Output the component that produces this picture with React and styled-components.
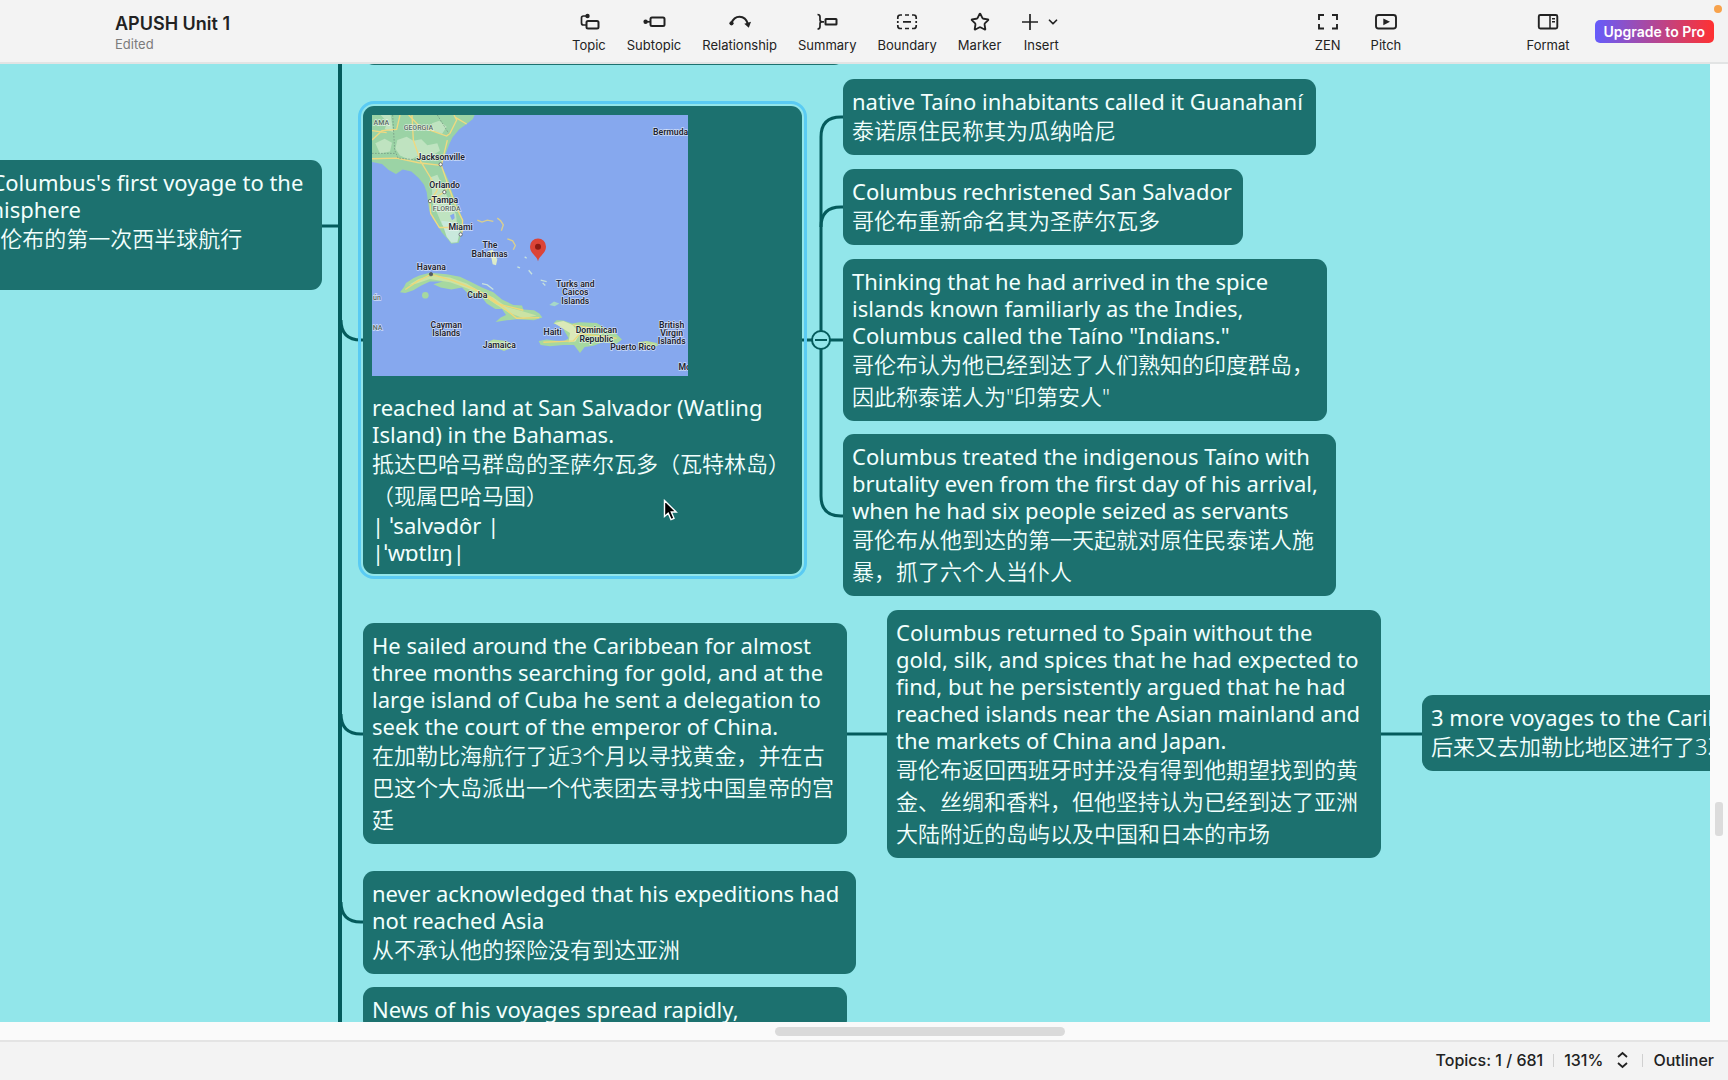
import styled, { createGlobalStyle } from "styled-components";
import { ChevronDown, Star } from "lucide-react";

const GlobalStyle = createGlobalStyle`
  * {
    box-sizing: border-box;
  }

  body {
    margin: 0;
    font-family: Inter, "Liberation Sans", sans-serif;
    color: #222;
  }

  button {
    font: inherit;
    color: inherit;
    border: none;
    background: none;
    padding: 0;
    cursor: pointer;
  }
`;

const Page = styled.div`
  display: flex;
  flex-direction: column;
  height: 100vh;
  overflow: hidden;
  background: #f3f3f3;
`;

/* ---------- toolbar ---------- */

const Toolbar = styled.header`
  position: relative;
  display: grid;
  grid-template-columns: 571fr auto 254fr auto 125fr auto auto;
  align-items: center;
  height: 64px;
  flex: none;
  padding-right: 14px;
  border-bottom: 2px solid #e2e4e4;
`;

const DocTitle = styled.div`
  padding: 3px 0 0 115px;
  white-space: nowrap;
`;

const DocName = styled.h1`
  margin: 0;
  font-size: 18px;
  font-weight: 600;
  line-height: 22px;
`;

const DocState = styled.div`
  font-size: 13px;
  line-height: 18px;
  color: #7b7b7b;
`;

const ToolGroup = styled.div`
  display: flex;
  gap: ${(p) => p.$gap}px;
  padding-top: 4px;
`;

const ToolButton = styled.button`
  display: flex;
  flex-direction: column;
  align-items: center;
  gap: 4px;
  font-size: 13px;
  line-height: 18px;
`;

const IconRow = styled.span`
  display: flex;
  align-items: center;
  justify-content: center;
  gap: 8px;
  height: 20px;
`;

const UpgradeButton = styled.button`
  height: 23px;
  margin-left: 25px;
  padding: 0 9px;
  border-radius: 5px;
  background: linear-gradient(90deg, #655cfb, #ff3131);
  color: #fff;
  font-size: 14px;
  font-weight: 600;
`;

const NoticeDot = styled.span`
  position: absolute;
  top: 5px;
  right: 6px;
  width: 8px;
  height: 8px;
  border-radius: 50%;
  background: #f7a24b;
`;

/* ---------- canvas ---------- */

const Workspace = styled.main`
  flex: 1;
  min-height: 0;
  display: grid;
  grid-template-columns: 1fr 18px;
  grid-template-rows: 1fr 18px;
  background: #fafafa;
`;

const Canvas = styled.section`
  position: relative;
  overflow: hidden;
  background: #92e6ea;
`;

const Links = styled.svg`
  position: absolute;
  top: 0;
  left: 0;
  width: 100%;
  height: 100%;
  fill: none;
  stroke: #045b5c;
  stroke-width: 3;
`;

const Topic = styled.article`
  position: absolute;
  left: ${(p) => p.$x}px;
  top: ${(p) => p.$y}px;
  width: ${(p) => p.$w}px;
  padding: 9px 9px 8px;
  border-radius: 11px;
  background: #1c716f;
  color: #f2fffd;
  font-family: "Noto Sans", "Noto Sans CJK SC", sans-serif;
  font-size: 22px;
  white-space: nowrap;
  outline: ${(p) => (p.$selected ? "3px solid #5acbf3" : "none")};
  outline-offset: 2px;
`;

const Line = styled.p`
  margin: 0;
  height: ${(p) => (p.$zh ? 32 : 27)}px;
  line-height: ${(p) => (p.$zh ? 30 : 26)}px;
  font-weight: ${(p) => (p.$zh ? 350 : 400)};
`;

const MapImage = styled.svg`
  display: block;
  width: 316px;
  height: 261px;
  margin-bottom: 18px;
`;

const Label = styled.text`
  font-family: Roboto, "Liberation Sans", sans-serif;
  font-size: ${(p) => (p.$minor ? 21 : 26)}px;
  font-weight: ${(p) => (p.$minor ? 500 : 600)};
  text-anchor: middle;
  fill: ${(p) => (p.$minor ? "#5b6b66" : "#1d2430")};
  stroke: rgba(255, 255, 255, 0.6);
  stroke-width: 4px;
  paint-order: stroke;
`;

const CollapseButton = styled.button`
  position: absolute;
  left: 811px;
  top: 266px;
  width: 20px;
  height: 20px;
  display: flex;
  align-items: center;
  justify-content: center;
  border: 2px solid #045b5c;
  border-radius: 50%;
  background: #92e6ea;

  &::before {
    content: "";
    width: 12px;
    height: 2px;
    background: #045b5c;
  }
`;

const Pointer = styled.svg`
  position: absolute;
  left: 663px;
  top: 435px;
  width: 15px;
  height: 23px;
`;

const VTrack = styled.div`
  padding-left: 5px;
`;

const VThumb = styled.div`
  position: relative;
  top: 77%;
  width: 8px;
  height: 34px;
  border-radius: 3px;
  background: #dcdcdc;
`;

const HTrack = styled.div`
  padding-top: 5px;
`;

const HThumb = styled.div`
  width: 17%;
  height: 9px;
  margin-left: 45.3%;
  border-radius: 5px;
  background: #dadada;
`;

/* ---------- status bar ---------- */

const StatusBar = styled.footer`
  display: flex;
  flex: none;
  align-items: center;
  justify-content: flex-end;
  gap: 10px;
  height: 40px;
  padding: 0 14px 2px 0;
  border-top: 2px solid #e4e4e4;
  font-size: 16px;
  font-weight: 500;
`;

const Divider = styled.span`
  width: 1px;
  height: 13px;
  background: #d0d0d0;
`;

const ZoomButton = styled.button`
  display: flex;
  align-items: center;
  gap: 14px;
  padding-right: 4px;
`;

const Glyph = ({ children, width = 24 }) => (
  <svg
    width={width}
    height="20"
    viewBox={`0 0 ${width} 20`}
    fill="none"
    stroke="currentColor"
    strokeWidth="1.7"
    aria-hidden="true"
  >
    {children}
  </svg>
);

const TopicIcon = () => (
  <Glyph>
    <rect x="9.5" y="9" width="12" height="7.5" rx="1.5" strokeWidth="2" />
    <path d="M10 4H6.5Q4.5 4 4.5 6V11Q4.5 13 6.5 13H9" />
    <circle cx="10.5" cy="4" r="2.2" fill="currentColor" stroke="none" />
  </Glyph>
);

const SubtopicIcon = () => (
  <Glyph>
    <rect x="8.5" y="5.5" width="14" height="8.5" rx="1.5" strokeWidth="2" />
    <path d="M3 9.8H8" />
    <circle cx="3.6" cy="9.8" r="2.2" fill="currentColor" stroke="none" />
  </Glyph>
);

const RelationshipIcon = () => (
  <Glyph>
    <path d="M3.5 11C5 7 8 4.7 11.5 4.7S18.5 7 20 12" strokeWidth="2" />
    <circle cx="3.5" cy="11.3" r="2.1" fill="currentColor" stroke="none" />
    <path d="M16.3 11.8L23 9.8L20.8 15.8Z" fill="currentColor" stroke="none" />
  </Glyph>
);

const SummaryIcon = () => (
  <Glyph>
    <path d="M2.5 2.5Q5 2.5 5 5V7.8Q5 9.8 7 9.8Q5 9.8 5 11.8V14.5Q5 17 2.5 17M6 9.8H9" />
    <rect x="10.5" y="7" width="11" height="5.5" rx="0.5" strokeWidth="2" />
  </Glyph>
);

const BoundaryIcon = () => (
  <Glyph>
    <path d="M2.8 7V5.5Q2.8 3 5.3 3H7M10 3H14M17 3H18.7Q21.2 3 21.2 5.5V7M21.2 9V11M21.2 13V14Q21.2 16.5 18.7 16.5H17M14 16.5H10M7 16.5H5.3Q2.8 16.5 2.8 14V13M2.8 11V9M8 9.8H16" />
  </Glyph>
);

const ZenIcon = () => (
  <Glyph>
    <path d="M3 8V3H8M16 3H21V8M21 12V16.5H16M8 16.5H3V12" strokeWidth="1.9" />
  </Glyph>
);

const PitchIcon = () => (
  <Glyph>
    <rect x="2" y="3" width="20" height="13.5" rx="2.5" strokeWidth="1.9" />
    <path d="M9.3 6.5L16 9.8L9.3 13.2Z" fill="currentColor" stroke="none" />
  </Glyph>
);

const FormatIcon = () => (
  <Glyph>
    <rect x="2.8" y="3" width="18.5" height="13.5" rx="1.5" strokeWidth="1.9" />
    <path d="M14 3V16.5M16 6.7H19M16 9.7H19" strokeWidth="1.5" />
  </Glyph>
);

const MarkerIcon = () => <Star size={20} strokeWidth={2.2} />;

const InsertIcon = () => (
  <>
    <Glyph width={16}>
      <path d="M8 2V18M0 10H16" />
    </Glyph>
    <ChevronDown size={14} strokeWidth={3} />
  </>
);

const editTools = [
  { label: "Topic", Icon: TopicIcon },
  { label: "Subtopic", Icon: SubtopicIcon },
  { label: "Relationship", Icon: RelationshipIcon },
  { label: "Summary", Icon: SummaryIcon },
  { label: "Boundary", Icon: BoundaryIcon },
  { label: "Marker", Icon: MarkerIcon },
  { label: "Insert", Icon: InsertIcon },
];

const viewTools = [
  { label: "ZEN", Icon: ZenIcon },
  { label: "Pitch", Icon: PitchIcon },
];

const Tools = ({ items, gap }) => (
  <ToolGroup $gap={gap}>
    {items.map(({ label, Icon }) => (
      <ToolButton key={label} type="button">
        <IconRow>
          <Icon />
        </IconRow>
        {label}
      </ToolButton>
    ))}
  </ToolGroup>
);

const CaribbeanMap = () => (
  <MapImage viewBox="66 75 948 782" preserveAspectRatio="none" role="img">
    <rect x="66" y="75" width="948" height="782" fill="#86a8ee" />

    {/* Georgia, Alabama and Florida */}
    <path
      d="M66 75H374L368 88L350 102L328 118L308 142L298 162L288 188L280 205L274 226L284 246L296 272L304 300L316 330L328 360L338 388L340 412L332 440L326 458L304 461L292 446L276 428L262 404L248 384L238 362L234 336L230 306L222 284L206 264L184 244L158 238L138 252L116 240L96 222L66 216Z"
      fill="#9bd3a5"
    />
    <path
      d="M92 75L112 96L104 118L130 126L122 75ZM142 150L170 140L190 152L214 148L232 166L262 160L270 182L240 200L206 196L180 210L150 196L136 176ZM246 100L268 92L290 110L276 132L250 124ZM76 160L104 146L126 158L120 184L90 190ZM240 262L262 254L276 284L296 330L318 372L322 410L300 430L276 404L262 370L248 340L246 300Z"
      fill="#bfe3c0"
    />
    <path d="M274 392L308 396L330 424L322 456L304 458L290 440Z" fill="#c9e9dc" />
    <path d="M300 376L312 370L314 384L306 390Z" fill="#86a8ee" />
    <path
      d="M66 206L140 204L206 218L272 226M186 75L190 150L212 214L240 260L262 300M176 75L210 110L290 138L300 130L320 90L312 75M350 102L316 82M274 226L292 150M274 226L296 290L318 350L338 390L336 428M262 300L240 334L242 370L268 412L304 412M240 334L282 306L296 290M66 150L96 122L140 118L150 75M66 122L110 128"
      fill="none"
      stroke="#f0d980"
      strokeWidth="4"
    />
    <path
      d="M128 75L134 180L144 204L206 210M66 190H134M262 75L296 130"
      fill="none"
      stroke="#6d8d7b"
      strokeWidth="2"
      strokeDasharray="5 4"
    />

    {/* Cuba */}
    <path
      d="M150 606L162 590L168 578L190 564L208 556L240 548L290 552L330 560L360 574L396 592L430 606L456 628L490 644L516 646L520 658L552 660L568 670L577 682L552 690L500 687L470 690L437 695L452 682L468 674L456 656L436 656L410 640L398 624L370 618L350 606L336 592L304 598L272 592L250 582L278 574L240 574L214 586L190 600L166 608Z"
      fill="#a6d8a0"
    />
    <path
      d="M176 584L206 566L250 556L300 562L350 580L390 604L430 622L470 650L520 664L560 676L520 684L474 666L440 644L400 616L350 594L300 576L240 566L200 580Z"
      fill="#cbe3a4"
    />
    <path
      d="M166 598L204 572L244 552L310 572L372 596L420 620L470 660L500 684L568 682M372 596L440 640L520 660"
      fill="none"
      stroke="#efd777"
      strokeWidth="4"
    />
    <circle cx="226" cy="615" r="10" fill="#a6d8a0" />

    {/* Jamaica, Hispaniola, Puerto Rico */}
    <path d="M412 756L430 748L470 752L494 768L462 782L440 772Z" fill="#b6dda0" />
    <path
      d="M610 700L620 690L640 691L666 700L688 696L740 698L766 714L796 728L816 748L800 760L758 756L730 766L704 770L690 788L672 764L640 764L600 768L572 764L566 752L590 748L640 754L656 744L644 724L636 708Z"
      fill="#a6d8a0"
    />
    <path d="M612 698L640 692L668 704L690 730L676 754L656 756L660 728Z" fill="#dbe9b8" />
    <path d="M580 756L670 752L690 730L800 744M668 704L760 720" fill="none" stroke="#efd777" strokeWidth="4" />
    <path d="M864 756L890 752L920 758L924 766L900 772L866 770Z" fill="#b9dc96" />
    <path d="M598 644L612 634L628 640L614 648Z" fill="#a6d8c8" />

    {/* Bahamas */}
    <path d="M382 390L396 396L412 390L430 394M442 384L452 392L460 404L454 422M472 446L488 452L496 466L490 479" fill="none" stroke="#d9cf8f" strokeWidth="4" />
    <path d="M412 484L428 478L442 508L438 525L428 522L424 502Z" fill="#dcebc8" />
    <path d="M502 530L510 533M536 540L546 552M572 570L590 574M578 578L586 586M524 500L530 504M396 580L412 584L430 598" fill="none" stroke="#c7e2dc" strokeWidth="4" />

    <g fill="#fff" stroke="#545b62" strokeWidth="2.5">
      <circle cx="272" cy="223" r="5" />
      <circle cx="283" cy="306" r="5" />
      <circle cx="240" cy="333" r="5" />
      <circle cx="332" cy="433" r="5" />
      <circle cx="243" cy="552" r="5" fill="#545b62" />
    </g>

    <Label $minor x="94" y="105">AMA</Label>
    <Label $minor x="205" y="119">GEORGIA</Label>
    <Label $minor x="290" y="363">FLORIDA</Label>
    <Label $minor x="81" y="628">ún</Label>
    <Label $minor x="83" y="718">NA</Label>
    <Label x="272" y="211">Jacksonville</Label>
    <Label x="284" y="294">Orlando</Label>
    <Label x="285" y="340">Tampa</Label>
    <Label x="332" y="420">Miami</Label>
    <Label x="420" y="475">The</Label>
    <Label x="419" y="500">Bahamas</Label>
    <Label x="244" y="538">Havana</Label>
    <Label x="382" y="624">Cuba</Label>
    <Label x="676" y="590">Turks and</Label>
    <Label x="676" y="615">Caicos</Label>
    <Label x="676" y="640">Islands</Label>
    <Label x="289" y="712">Cayman</Label>
    <Label x="289" y="737">Islands</Label>
    <Label x="448" y="773">Jamaica</Label>
    <Label x="608" y="733">Haiti</Label>
    <Label x="739" y="729">Dominican</Label>
    <Label x="739" y="754">Republic</Label>
    <Label x="849" y="780">Puerto Rico</Label>
    <Label x="965" y="712">British</Label>
    <Label x="965" y="737">Virgin</Label>
    <Label x="965" y="762">Islands</Label>
    <Label x="962" y="134">Bermuda</Label>
    <Label x="1004" y="840">Mo</Label>

    <path d="M564 513C560 496 540 490 540 469A24 24 0 0 1 588 469C588 490 568 496 564 513Z" fill="#dc4437" />
    <circle cx="564" cy="470" r="9" fill="#8d1a12" />
  </MapImage>
);

// y is measured from the top edge of the canvas; "zh" lines are taller
const topics = [
  {
    id: "voyage",
    x: -146,
    y: 96,
    w: 468,
    lines: [
      "Christopher Columbus's first voyage to the",
      "Western Hemisphere",
      { zh: "克里斯托弗·哥伦布的第一次西半球航行" },
      "\u00a0",
    ],
  },
  { id: "previous", x: 363, y: -75, w: 482, lines: ["\u00a0", { zh: "\u00a0" }] },
  {
    id: "landfall",
    x: 363,
    y: 42,
    w: 439,
    selected: true,
    map: true,
    lines: [
      "reached land at San Salvador (Watling",
      "Island) in the Bahamas.",
      { zh: "抵达巴哈马群岛的圣萨尔瓦多（瓦特林岛）" },
      { zh: "（现属巴哈马国）" },
      "| ˈsalvədôr |",
      "|ˈwɒtlɪŋ|",
    ],
  },
  {
    id: "guanahani",
    x: 843,
    y: 15,
    w: 473,
    lines: ["native Taíno inhabitants called it Guanahaní", { zh: "泰诺原住民称其为瓜纳哈尼" }],
  },
  {
    id: "rechristened",
    x: 843,
    y: 105,
    w: 400,
    lines: ["Columbus rechristened San Salvador", { zh: "哥伦布重新命名其为圣萨尔瓦多" }],
  },
  {
    id: "indies",
    x: 843,
    y: 195,
    w: 484,
    lines: [
      "Thinking that he had arrived in the spice",
      "islands known familiarly as the Indies,",
      'Columbus called the Taíno "Indians."',
      { zh: "哥伦布认为他已经到达了人们熟知的印度群岛，" },
      { zh: '因此称泰诺人为"印第安人"' },
    ],
  },
  {
    id: "brutality",
    x: 843,
    y: 370,
    w: 493,
    lines: [
      "Columbus treated the indigenous Taíno with",
      "brutality even from the first day of his arrival,",
      "when he had six people seized as servants",
      { zh: "哥伦布从他到达的第一天起就对原住民泰诺人施" },
      { zh: "暴，抓了六个人当仆人" },
    ],
  },
  {
    id: "caribbean",
    x: 363,
    y: 559,
    w: 484,
    lines: [
      "He sailed around the Caribbean for almost",
      "three months searching for gold, and at the",
      "large island of Cuba he sent a delegation to",
      "seek the court of the emperor of China.",
      { zh: "在加勒比海航行了近3个月以寻找黄金，并在古" },
      { zh: "巴这个大岛派出一个代表团去寻找中国皇帝的宫" },
      { zh: "廷" },
    ],
  },
  {
    id: "return",
    x: 887,
    y: 546,
    w: 494,
    lines: [
      "Columbus returned to Spain without the",
      "gold, silk, and spices that he had expected to",
      "find, but he persistently argued that he had",
      "reached islands near the Asian mainland and",
      "the markets of China and Japan.",
      { zh: "哥伦布返回西班牙时并没有得到他期望找到的黄" },
      { zh: "金、丝绸和香料，但他坚持认为已经到达了亚洲" },
      { zh: "大陆附近的岛屿以及中国和日本的市场" },
    ],
  },
  {
    id: "more-voyages",
    x: 1422,
    y: 631,
    w: 480,
    lines: ["3 more voyages to the Caribbean", { zh: "后来又去加勒比地区进行了3次航行" }],
  },
  {
    id: "asia",
    x: 363,
    y: 807,
    w: 493,
    lines: [
      "never acknowledged that his expeditions had",
      "not reached Asia",
      { zh: "从不承认他的探险没有到达亚洲" },
    ],
  },
  { id: "news", x: 363, y: 923, w: 484, lines: ["News of his voyages spread rapidly,"] },
];

const TopicNode = ({ topic }) => (
  <Topic $x={topic.x} $y={topic.y} $w={topic.w} $selected={topic.selected}>
    {topic.map && <CaribbeanMap />}
    {topic.lines.map((line, i) => (
      <Line key={i} $zh={Boolean(line.zh)} lang={line.zh ? "zh-CN" : "en"}>
        {line.zh || line}
      </Line>
    ))}
  </Topic>
);

const App = () => (
  <Page>
    <GlobalStyle />
    <Toolbar>
      <DocTitle>
        <DocName>APUSH Unit 1</DocName>
        <DocState>Edited</DocState>
      </DocTitle>
      <Tools items={editTools} gap={21} />
      <span />
      <Tools items={viewTools} gap={30} />
      <span />
      <Tools items={[{ label: "Format", Icon: FormatIcon }]} gap={0} />
      <UpgradeButton type="button">Upgrade to Pro</UpgradeButton>
      <NoticeDot />
    </Toolbar>

    <Workspace>
      <Canvas>
        <Links aria-hidden="true">
          <path d="M340 0V1000" strokeWidth="4" />
          <path d="M320 162H340" />
          <path d="M341 256Q341 276 361 276H364" />
          <path d="M341 650Q341 670 361 670H364" />
          <path d="M341 838Q341 858 361 858H364" />
          <path d="M800 276H844" />
          <path d="M821 276V73Q821 53 841 53H844" />
          <path d="M821 163Q821 143 841 143H844" />
          <path d="M821 276V432Q821 452 841 452H844" />
          <path d="M846 670H888M1380 670H1423" />
        </Links>
        {topics.map((topic) => (
          <TopicNode key={topic.id} topic={topic} />
        ))}
        <CollapseButton type="button" aria-label="Collapse branch" />
        <Pointer viewBox="0 0 15 23" aria-hidden="true">
          <path
            d="M1.5 1.5V17.5L5.2 14.2L8 20.6L11 19.3L8.3 13H13.2Z"
            fill="#000"
            stroke="#fff"
            strokeWidth="1.4"
          />
        </Pointer>
      </Canvas>
      <VTrack>
        <VThumb />
      </VTrack>
      <HTrack>
        <HThumb />
      </HTrack>
    </Workspace>

    <StatusBar>
      <span>Topics: 1 / 681</span>
      <Divider />
      <ZoomButton type="button">
        131%
        <svg width="11" height="18" viewBox="0 0 11 18" fill="none" stroke="currentColor" strokeWidth="1.8" aria-hidden="true">
          <path d="M1 6L5.5 2L10 6M1 12L5.5 16L10 12" />
        </svg>
      </ZoomButton>
      <Divider />
      <button type="button">Outliner</button>
    </StatusBar>
  </Page>
);

export default App;
